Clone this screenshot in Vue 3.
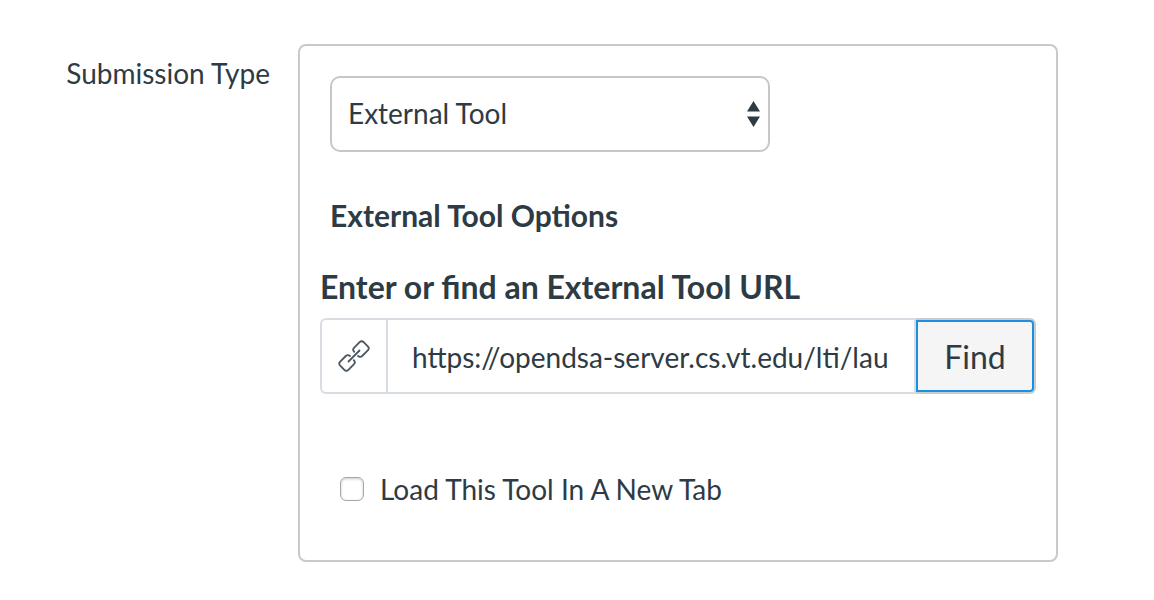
<script setup>
import { ref } from 'vue'

const submissionType = ref('external_tool')
const toolUrl = ref('https://opendsa-server.cs.vt.edu/lti/lau')
const newTab = ref(false)
</script>

<template>
  <form class="row" @submit.prevent>
    <label class="row-label" for="submission-type">Submission Type</label>
    <div class="panel">
      <div class="select-wrap">
        <select id="submission-type" v-model="submissionType" class="select">
          <option value="external_tool">External Tool</option>
        </select>
        <svg class="arrows" viewBox="0 0 14 26" width="14" height="26" aria-hidden="true">
          <path d="M6.500 0L13 10.500H0z M0 15.500H13L6.500 26z" fill="#2d3b45" />
        </svg>
      </div>

      <h2 class="options-title">External Tool Options</h2>

      <div class="url-block">
        <label class="url-label" for="tool-url">Enter or find an External Tool URL</label>
        <div class="url-group">
          <span class="url-icon">
            <svg viewBox="0 0 34 34" width="34" height="34" fill="none" stroke="#4a5660" stroke-width="1.8" stroke-linecap="round" stroke-linejoin="round" aria-hidden="true">
              <path d="M17.200 12.800Q15.200 10.700 17 8.800L22.600 3.200Q24.700 1.200 26.700 3.200L30.800 7.300Q32.800 9.400 30.800 11.400L25.200 17Q23.200 18.800 21 17" />
              <path d="M13 17Q10.800 15.200 8.800 17L3.200 22.600Q1.200 24.600 3.200 26.700L7.300 30.800Q9.300 32.800 11.400 30.800L17 25.200Q18.800 23.300 16.800 21.200" />
              <path d="M11.500 22.500L22.500 11.500" />
            </svg>
          </span>
          <input id="tool-url" v-model="toolUrl" class="url-input" type="text" />
          <button class="find" type="button"><span class="find-face">Find</span></button>
        </div>
      </div>

      <label class="check" for="new-tab">
        <input id="new-tab" v-model="newTab" class="box" type="checkbox" />
        Load This Tool In A New Tab
      </label>
    </div>
  </form>
</template>

<style>
body {
  background: #fff;
}
</style>

<style scoped>
.row,
.row * {
  box-sizing: border-box;
}

.row {
  display: flex;
  align-items: flex-start;
  padding: 44px 96px 38px 0;
  color: #2d3b45;
  font-family: Lato, "Liberation Sans", sans-serif;
  font-size: 28px;
  line-height: 36px;
}

.row-label {
  flex: 0 0 270px;
  margin-right: 28px;
  padding-top: 11px;
  text-align: right;
}

.panel {
  flex: 1;
  min-width: 0;
  padding: 30px 20px 53px;
  border: 2px solid #c7cacc;
  border-radius: 8px;
}

.select-wrap {
  position: relative;
  width: 440px;
  max-width: 100%;
  margin-left: 10px;
}

.select {
  display: block;
  width: 100%;
  height: 76px;
  padding: 0 40px 2px 16px;
  border: 2px solid #c7c7c7;
  border-radius: 10px;
  background: #fff;
  color: inherit;
  font: inherit;
  appearance: none;
}

.arrows {
  position: absolute;
  top: 25px;
  right: 9px;
  pointer-events: none;
}

.options-title {
  margin: 45px 10px 0;
  font-size: 30px;
  line-height: 36px;
  font-weight: 700;
}

.url-label {
  display: block;
  margin-top: 34px;
  font-size: 32px;
  line-height: 40px;
  font-weight: 700;
}

.url-group {
  display: flex;
  height: 76px;
  margin-top: 11px;
}

.url-icon {
  display: flex;
  flex: 0 0 66px;
  align-items: center;
  justify-content: center;
  border: 2px solid #d7dde2;
  border-right: 0;
  border-radius: 6px 0 0 6px;
}

.url-input {
  flex: 1;
  min-width: 0;
  padding: 2px 24px 0;
  border: 2px solid #d7dde2;
  border-radius: 0;
  background: #fff;
  color: inherit;
  font: inherit;
  outline: 0;
}

.find {
  flex: 0 0 120px;
  padding: 0;
  border: 2px solid #c7cdd1;
  border-left: 0;
  border-radius: 0 6px 6px 0;
  background: #f5f5f5;
  color: inherit;
  font: inherit;
  font-size: 32px;
}

.find-face {
  display: flex;
  align-items: center;
  justify-content: center;
  height: 100%;
  padding-top: 2px;
  border: 2px solid #1c8fe0;
  border-radius: 0 4px 4px 0;
}

.check {
  display: flex;
  align-items: center;
  gap: 16px;
  margin: 77px 20px 0;
}

.box {
  width: 24px;
  height: 24px;
  margin: 0;
  border: 1px solid #a6a6a6;
  border-radius: 6px;
  background: #fff;
  box-shadow: inset 0 1px 3px #ccc;
  appearance: none;
}

.box:checked {
  background: #1c8fe0;
}
</style>
